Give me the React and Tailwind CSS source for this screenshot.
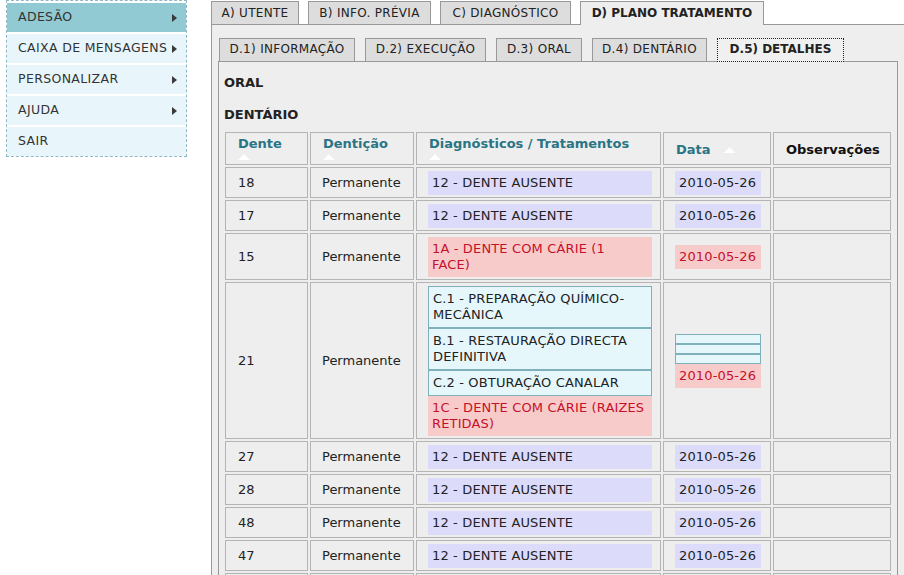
import React from "react";

const menu = [
  { label: "ADESÃO", arrow: true, active: true },
  { label: "CAIXA DE MENSAGENS", arrow: true },
  { label: "PERSONALIZAR", arrow: true },
  { label: "AJUDA", arrow: true },
  { label: "SAIR", arrow: false },
];

const topTabs = [
  { t: "A) UTENTE", w: "w-[88px]" },
  { t: "B) INFO. PRÉVIA", w: "w-[123px]" },
  { t: "C) DIAGNÓSTICO", w: "w-[131px]" },
  { t: "D) PLANO TRATAMENTO", w: "w-[184px]", active: true },
];
const subTabs = [
  { t: "D.1) INFORMAÇÃO", w: "w-[136px]" },
  { t: "D.2) EXECUÇÃO", w: "w-[121px]" },
  { t: "D.3) ORAL", w: "w-[86px]" },
  { t: "D.4) DENTÁRIO", w: "w-[115px]" },
  { t: "D.5) DETALHES", w: "w-[127px]", active: true },
];

const ausente = { diag: [{ t: "12 - DENTE AUSENTE", k: "lav" }], data: [{ t: "2010-05-26", k: "lav" }] };

const rows = [
  { dente: "18", ...ausente },
  { dente: "17", ...ausente },
  {
    dente: "15",
    diag: [{ t: "1A - DENTE COM CÁRIE (1", t2: "FACE)", k: "red" }],
    data: [{ t: "2010-05-26", k: "red" }],
  },
  {
    dente: "21",
    diag: [
      { t: "C.1 - PREPARAÇÃO QUÍMICO-MECÂNICA", k: "cyan" },
      { t: "B.1 - RESTAURAÇÃO DIRECTA DEFINITIVA", k: "cyan" },
      { t: "C.2 - OBTURAÇÃO CANALAR", k: "cyan" },
      { t: "1C - DENTE COM CÁRIE (RAIZES RETIDAS)", k: "red" },
    ],
    data: [
      { t: "", k: "cyan" },
      { t: "", k: "cyan" },
      { t: "", k: "cyan" },
      { t: "2010-05-26", k: "red" },
    ],
  },
  { dente: "27", ...ausente },
  { dente: "28", ...ausente },
  { dente: "48", ...ausente },
  { dente: "47", ...ausente },
  { dente: "", blank: true, diag: [], data: [] },
];

const boxStyles = {
  lav: "bg-[#dcdcfa] text-[#222]",
  red: "bg-[#f8cbcb] text-[#c5102c]",
  cyan: "bg-[#e6f7fc] text-[#222] border border-[#7fb1bd]",
};

const SortArrow = ({ w = 12 }) => (
  <svg width={w} height="8" viewBox="0 0 12 8" className="block">
    <polygon points="0,7 6,1 12,7" fill="#ffffff" fillOpacity="0.9" />
  </svg>
);

const Box = ({ item }) => (
  <div className={`px-[4px] leading-[16px] tracking-[0.15px] ${item.t ? "py-[4px]" : "h-[10px]"} ${boxStyles[item.k]}`}>
    {item.t}
    {item.t2 && (
      <>
        <br />
        {item.t2}
      </>
    )}
  </div>
);

const cell = "border border-[#b4b4b4] bg-[#eeeeee]";

export default function App() {
  return (
    <div className="min-h-[575px] bg-white font-['DejaVu_Sans',Verdana,sans-serif] text-[#222] flex items-start overflow-hidden">
      {/* Sidebar menu */}
      <div className="ml-[6px] w-[181px] border border-dashed border-[#8fb8c6] pt-[2px]">
        {menu.map((m) => (
          <div
            key={m.label}
            className={`h-[29px] mb-[2px] last:mb-0 flex items-center justify-between pl-[11px] pr-[9px] text-[12.5px] tracking-[0.35px] text-[#333] ${
              m.active ? "bg-[#91cad3]" : "bg-[#e8f6fb]"
            }`}
          >
            <span>{m.label}</span>
            {m.arrow && (
              <svg width="5" height="8" viewBox="0 0 5 8">
                <polygon points="0,0 5,4 0,8" fill="#3a3a3a" />
              </svg>
            )}
          </div>
        ))}
      </div>

      {/* Main panel */}
      <div className="ml-[24px] w-[693px] shrink-0 pt-[1px]">
        <div className="relative z-10 flex items-end gap-[9px]">
          {topTabs.map((tab) => (
            <div
              key={tab.t}
              className={`${tab.w} border border-b-0 border-[#999] text-center text-[12px] leading-[22px] ${
                tab.active ? "bg-[#eeeeee] font-bold h-[24px] -mb-px" : "bg-[#dddddd] h-[23px] tracking-[0.3px]"
              }`}
            >
              {tab.t}
            </div>
          ))}
        </div>

        <div className="border-t border-l border-[#999] bg-[#eeeeee] pt-[13px] pl-[6px] pr-[6px] min-h-[560px]">
          <div className="relative z-10 flex items-end gap-[10px] pl-[1px]">
            {subTabs.map((tab) => (
              <div
                key={tab.t}
                className={`${tab.w} text-center text-[12px] leading-[21px] border ${
                  tab.active
                    ? "bg-[#f0f0f0] font-bold border-dotted border-[#222] -mb-px h-[24px]"
                    : "bg-[#dddddd] border-[#999] border-b-0 h-[23px] tracking-[0.3px]"
                }`}
              >
                {tab.t}
              </div>
            ))}
          </div>

          <div className="border-t border-l border-r border-[#999] bg-[#eeeeee] pt-[13px] pl-[4px] pr-[3px] min-h-[520px]">
            <div className="font-bold text-[13px] leading-[16px] pl-[1px]">ORAL</div>
            <div className="font-bold text-[13px] leading-[16px] mt-[16px] pl-[1px]">DENTÁRIO</div>

            <table className="mt-[7px] w-[670px] table-fixed border-separate border-spacing-[2px] text-[13px]">
              <colgroup>
                <col className="w-[83px]" />
                <col className="w-[104px]" />
                <col className="w-[245px]" />
                <col className="w-[108px]" />
                <col />
              </colgroup>
              <thead>
                <tr className="h-[33px]">
                  {["Dente", "Dentição", "Diagnósticos / Tratamentos"].map((h) => (
                    <th
                      key={h}
                      className={`${cell} px-[12px] pt-[3px] pb-[2px] text-left align-top font-bold text-[#2a7585]`}
                    >
                      <div className="leading-[16px] whitespace-nowrap">{h}</div>
                      <div className="pt-[1px] h-[10px]">
                        <SortArrow />
                      </div>
                    </th>
                  ))}
                  <th className={`${cell} px-[12px] text-left align-middle font-bold text-[#2a7585]`}>
                    <div className="flex items-center gap-[11px] leading-[16px] pt-[3px]">
                      <span>Data</span>
                      <SortArrow w={15} />
                    </div>
                  </th>
                  <th className={`${cell} px-[12px] text-left align-middle font-bold text-[#111]`}>
                    <div className="leading-[16px] pt-[3px]">Observações</div>
                  </th>
                </tr>
              </thead>
              <tbody>
                {rows.map((r, idx) => (
                  <tr key={idx} className={r.blank ? "h-[31px]" : ""}>
                    <td className={`${cell} pl-[12px] align-middle leading-[16px]`}>{r.dente}</td>
                    <td className={`${cell} pl-[11px] align-middle leading-[16px]`}>{r.blank ? "" : "Permanente"}</td>
                    <td className={`${cell} pl-[11px] pr-[8px] pt-[3px] pb-[2px] align-middle`}>
                      {r.diag.map((d, i) => (
                        <Box key={i} item={d} />
                      ))}
                    </td>
                    <td className={`${cell} pl-[11px] pr-[9px] pt-[3px] pb-[2px] align-middle`}>
                      {r.data.map((d, i) => (
                        <Box key={i} item={d} />
                      ))}
                    </td>
                    <td className={cell}></td>
                  </tr>
                ))}
              </tbody>
            </table>
          </div>
        </div>
      </div>
    </div>
  );
}
